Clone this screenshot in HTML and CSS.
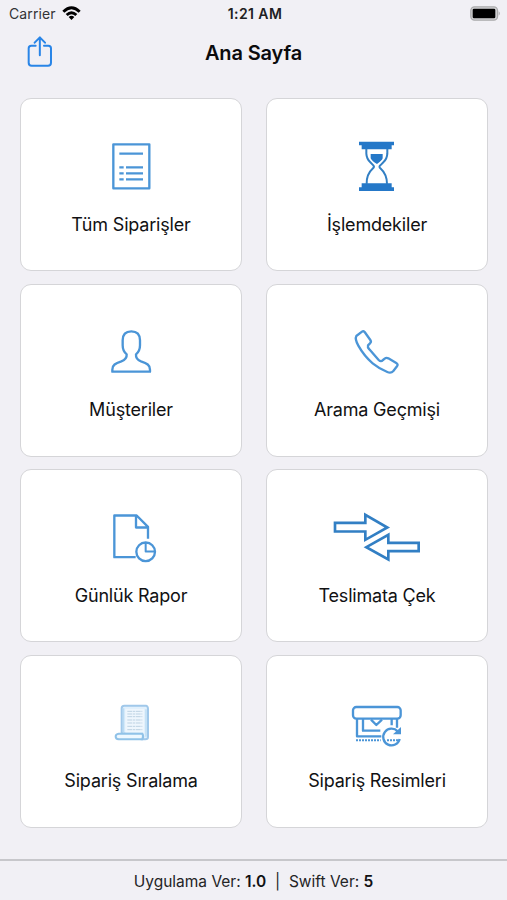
FILE: index.html
```html
<!DOCTYPE html>
<html lang="tr">
<head>
<meta charset="utf-8">
<title>Ana Sayfa</title>
<link rel="stylesheet" href="styles.css">
</head>
<body>
<div class="screen">
  <header class="status">
    <div class="carrier"><span>Carrier</span>
      <svg class="wifi" viewBox="0 0 57 42"><path d="M1 14Q28.500-12 56 14L50 20Q28.500-1 7 20ZM11 24Q28.500 8 46 24L40 30Q28.500 19 17 30ZM20 33Q28.500 26 37 33L28.500 42Z"/></svg>
    </div>
    <span class="time">1:21 AM</span>
    <div class="power"><svg class="battery" viewBox="0 0 93 45"><rect x="2.500" y="2.500" width="80" height="40" rx="11" fill="#d6d6d8" stroke="#aaaaac" stroke-width="4"/><rect x="8" y="8" width="68" height="29" rx="4"/><path d="M86 16Q93 22.500 86 29Z" fill="#aaaaac"/></svg></div>
  </header>
  <nav class="navbar">
    <svg class="share" viewBox="82 108 78 94"><path d="M108 137H95Q87 137 87 145V188Q87 197 96 197H145Q154 197 154 188V145Q154 137 146 137H133M120.500 166V113M105 128L120.500 112L136 128"/></svg>
    <h1>Ana Sayfa</h1>
  </nav>
  <main class="grid">
    <section class="card">
      <svg class="icon" viewBox="-27 16 300 192"><g class="light"><path stroke-width="7" d="M70 44H178V176H70Z"/><path stroke-width="7" d="M88 72H159M88 113H101M108 113H159M88 131H101M108 131H159M88 149H101M108 149H159"/></g></svg>
      <span class="label">Tüm Siparişler</span>
    </section>
    <section class="card">
      <svg class="icon" viewBox="-39 16 300 192"><path class="fill" d="M57 36H162V47H155V59H65V47H57ZM57 184V173H65V161H155V173H162V184ZM92 73H128V86Q126 93 111 103Q95 94 92 86Z"/><path class="line" stroke-width="6" d="M79 57V72Q80 88 91 98L100 107Q104 111 99 116Q79 134 80 163M142 57V72Q141 88 130 98L121 107Q116 111 121 116Q141 134 141 163"/></svg>
      <span class="label">İşlemdekiler</span>
    </section>
    <section class="card">
      <svg class="icon" viewBox="-27 3 300 192"><path class="light" stroke-width="7" d="M67 155H180V149C180 135 171 130 153 124C143 120 137 113 138 103C147 96 150 88 150 76V61C150 43 141 34 124 34S98 43 98 61V76C98 88 101 96 110 103C111 113 104 120 94 124C76 130 67 135 67 149Z"/></svg>
      <span class="label">Müşteriler</span>
    </section>
    <section class="card">
      <svg class="icon" viewBox="-39 3 300 192"><path class="light" stroke-width="7" d="M66 35Q70 32 74 36L91 60Q95 66 90 70L84 76Q82 82 88 88L116 120Q123 127 129 120L134 116Q139 112 145 115L170 130Q175 134 171 139L160 153Q153 161 142 156Q119 147 98 130Q73 109 55 77Q44 57 49 48Z"/></svg>
      <span class="label">Arama Geçmişi</span>
    </section>
    <section class="card">
      <svg class="icon" viewBox="-27 4.500 300 192"><g class="light"><path stroke-width="7" d="M137 158H73V33H140L174 67V103M138 35V69H173"/><circle stroke-width="7" cx="167" cy="142" r="28"/><path stroke-width="6" d="M167 115V141H194"/></g></svg>
      <span class="label">Günlük Rapor</span>
    </section>
    <section class="card">
      <svg class="icon" viewBox="6 4.500 300 192"><path class="line" stroke-width="8" d="M30 55H121V31L187 69L121 106V81H30ZM281 115H190V91L124 128L190 165V140H281Z"/></svg>
      <span class="label">Teslimata Çek</span>
    </section>
    <section class="card">
      <svg class="icon" viewBox="-27 -9 300 192"><path d="M95 115V40Q95 32 103 32H168Q174 34 174 42V126Q174 133 166 133H155V116Z" fill="#e1f0fc" stroke="#a0c8ea" stroke-width="6"/><path d="M106 42H162V113H106Z" fill="#eef6fd"/><path d="M101 40V112M168 43V125" fill="none" stroke="#b9dbf4" stroke-width="4"/><path d="M112 49H157M112 57H157M112 65H157M112 75H157M112 84H157M112 94H157M112 104H157" fill="none" stroke="#bdd2e3" stroke-width="3" stroke-dasharray="14 2 8 2"/><path d="M86 116H157Q162 124 157 133H86Q77 132 77 124.500T86 116Z" fill="#eef8ff" stroke="#90c2e8" stroke-width="6"/></svg>
      <span class="label">Sipariş Sıralama</span>
    </section>
    <section class="card">
      <svg class="icon" viewBox="-39 -9 300 192"><g class="light"><rect x="39" y="36" width="143" height="35" rx="10" stroke-width="7"/><path stroke-width="7" d="M51 72V124H124M69 72V107H121M171 72V98M155 72V91M93 74L109 90L126 74"/><path stroke-width="6" stroke-dasharray="6 3" d="M48 136H122M141 136H174"/><path stroke-width="7" d="M173 109A25 25 0 1 0 179 132"/></g><path d="M183 96V118H159Z" fill="#4b95d7"/></svg>
      <span class="label">Sipariş Resimleri</span>
    </section>
  </main>
  <footer class="footer"><span class="version">Uygulama Ver: <b>1.0</b> &nbsp;|&nbsp; Swift Ver: <b>5</b></span></footer>
</div>
</body>
</html>
```

FILE: styles.css
```css
* { box-sizing: border-box; }
body { margin: 0; background: #f1f0f5; color: #111113; font-family: Inter, "Liberation Sans", sans-serif; }
.screen { width: 507px; height: 900px; display: flex; flex-direction: column; overflow: hidden; }
.status { height: 28px; padding: 0 6px 1px 9px; display: grid; grid-template-columns: 1fr auto 1fr; align-items: center; font-size: 14px; }
.carrier { display: flex; align-items: center; gap: 6px; color: #333335; letter-spacing: 0.1px; }
.wifi { width: 19px; height: 14px; margin-top: -1px; }
.time { font-weight: 600; font-size: 14px; letter-spacing: 0.4px; color: #202022; }
.power { display: flex; justify-content: flex-end; }
.battery { width: 31px; height: 15px; margin-top: -1px; }
.navbar { height: 70px; padding: 8px 27px 0; display: grid; grid-template-columns: 1fr auto 1fr; align-items: start; }
.share { width: 26px; height: 31.300px; fill: none; stroke: #2985e7; stroke-width: 6; stroke-linecap: round; stroke-linejoin: round; }
h1 { margin: 3px 0 0; font-size: 20px; line-height: 28px; font-weight: 600; letter-spacing: -0.15px; color: #0b0b0d; }
.grid { display: grid; grid-template-columns: 222px 222px; grid-template-rows: repeat(4, 173.200px); column-gap: 24px; row-gap: 12.300px; padding: 0.300px 0 0 20px; }
.card { display: flex; flex-direction: column; align-items: center; padding-top: 36px; background: #fff; border: 1px solid #d5d5d8; border-radius: 11px; }
.icon { width: 100px; height: 64px; flex: none; }
.light, .line { fill: none; stroke: #4b95d7; stroke-linejoin: round; }
.line { stroke: #327fc4; stroke-linejoin: miter; }
.fill { fill: #2578c8; }
.label { margin-top: 12.400px; font-size: 18px; line-height: 26px; letter-spacing: -0.19px; white-space: nowrap; }
.footer { height: 41px; padding-top: 1px; margin-top: auto; border-top: 2px solid #c7c7cb; display: flex; justify-content: center; align-items: center; font-size: 15.500px; color: #242426; }
.version b { font-weight: 600; color: #111113; }
```
